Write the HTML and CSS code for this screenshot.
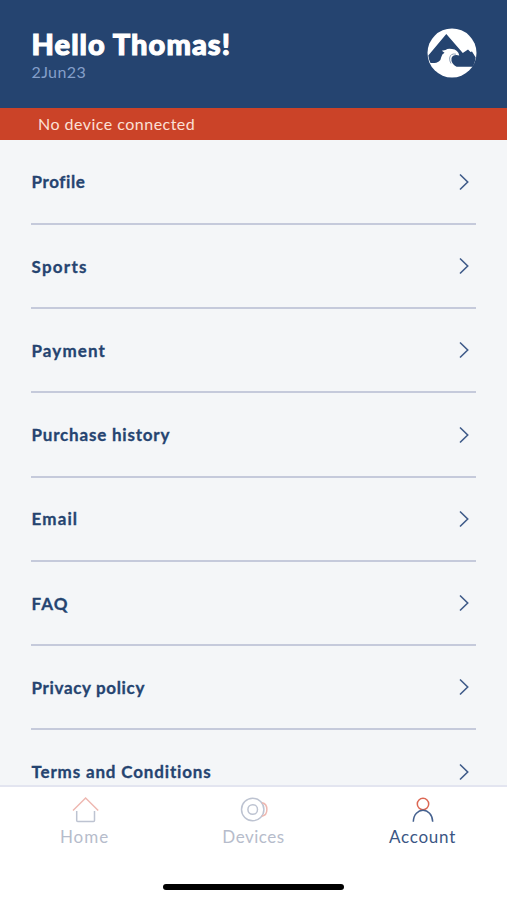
FILE: index.html
```html
<!DOCTYPE html>
<html lang="en">
<head>
<meta charset="utf-8">
<meta name="viewport" content="width=device-width, initial-scale=1">
<title>Account</title>
<link rel="stylesheet" href="styles.css">
</head>
<body>
<div class="app">
  <header class="header">
    <div class="greeting">
      <h1 class="title">Hello Thomas!</h1>
      <p class="date">2Jun23</p>
    </div>
    <svg class="logo" viewBox="0 0 50 50">
      <circle cx="25" cy="25" r="24.5" fill="#fff"/>
      <path fill="#254470" d="M1.300 27.500 L19.300 6 L35.800 25 L41 21.500 L43.500 24 L45 23.500 L48.700 29.500 Q48 34.500 46 38.800 H24 L12 35 H3.500 Q1.500 31 1.300 27.500Z"/>
      <path fill="#fff" d="M6 35.300 Q13.500 35 14.300 29 Q14.800 26 17.500 24.800 L14.800 22.800 L18.500 22 Q21 20 25 21 Q31 21.500 32.300 27.500 Q26 26 24.500 30 Q23.500 35.500 30 39.300 L25 42 L10 39Z"/>
      <path fill="none" stroke="#254470" stroke-width=".5" d="M29 26.200 Q23.500 25 22.600 30 Q22.500 33 24 35.500"/>
    </svg>
  </header>
  <div class="banner">No device connected</div>
  <main class="list">
    <a class="row"><span class="label profile">Profile</span><svg class="chevron" viewBox="0 0 10 18"><path d="M1 1.500 8.700 9 1 16.500"/></svg></a>
    <a class="row"><span class="label sports">Sports</span><svg class="chevron" viewBox="0 0 10 18"><path d="M1 1.500 8.700 9 1 16.500"/></svg></a>
    <a class="row"><span class="label payment">Payment</span><svg class="chevron" viewBox="0 0 10 18"><path d="M1 1.500 8.700 9 1 16.500"/></svg></a>
    <a class="row"><span class="label purchase">Purchase history</span><svg class="chevron" viewBox="0 0 10 18"><path d="M1 1.500 8.700 9 1 16.500"/></svg></a>
    <a class="row"><span class="label email">Email</span><svg class="chevron" viewBox="0 0 10 18"><path d="M1 1.500 8.700 9 1 16.500"/></svg></a>
    <a class="row"><span class="label faq">FAQ</span><svg class="chevron" viewBox="0 0 10 18"><path d="M1 1.500 8.700 9 1 16.500"/></svg></a>
    <a class="row"><span class="label privacy">Privacy policy</span><svg class="chevron" viewBox="0 0 10 18"><path d="M1 1.500 8.700 9 1 16.500"/></svg></a>
    <a class="row"><span class="label terms">Terms and Conditions</span><svg class="chevron" viewBox="0 0 10 18"><path d="M1 1.500 8.700 9 1 16.500"/></svg></a>
  </main>
  <footer class="footer">
    <nav class="tabs">
      <a class="tab home">
        <svg class="icon" viewBox="0 0 28 28"><path class="accent" d="M2 14.500 14.600 2 27.200 14.500"/><path d="M5.700 15V24.500Q5.700 25.500 6.700 25.500H22.500Q23.500 25.500 23.500 24.500V15"/></svg>
        <span>Home</span>
      </a>
      <a class="tab devices">
        <svg class="icon" viewBox="0 0 28 28"><circle cx="12.700" cy="13.500" r="11.200"/><circle cx="12.700" cy="13.500" r="4.800"/><path class="accent" d="M22 6.800C28.500 8 28.500 19 22 20.200"/></svg>
        <span>Devices</span>
      </a>
      <a class="tab account">
        <svg class="icon" viewBox="0 0 28 28"><circle class="accent" cx="14" cy="8" r="5.700"/><path d="M4.300 25.800C4.700 10.500 23.300 10.500 23.700 25.800"/></svg>
        <span>Account</span>
      </a>
    </nav>
    <div class="home-indicator"></div>
  </footer>
</div>
</body>
</html>
```
FILE: styles.css
```css
* { box-sizing: border-box; }
body { margin: 0; font-family: Lato, "Liberation Sans", sans-serif; }
.app {
  height: 900px;
  display: flex;
  flex-direction: column;
  overflow: hidden;
  background: #f4f6f8;
  color: #254470;
}
.header {
  flex: 0 0 108px;
  display: flex;
  justify-content: space-between;
  align-items: flex-start;
  padding: 28px 30px 0 31.500px;
  background: #254470;
}
.title {
  margin: 0;
  font-size: 29px;
  line-height: 32px;
  font-weight: 900;
  letter-spacing: 1.050px;
  -webkit-text-stroke: 1.100px #fff;
  color: #fff;
}
.date {
  margin: 2px 0 0;
  font-size: 16px;
  line-height: 20px;
  letter-spacing: 0.400px;
  color: #849fc9;
}
.logo { width: 50px; height: 50px; }
.banner {
  flex: 0 0 32px;
  height: 32px;
  padding-left: 38px;
  font-size: 16px;
  line-height: 32px;
  letter-spacing: 0.480px;
  background: #cb4328;
  color: #fbe0d6;
}
.list {
  flex: 1 1 0;
  min-height: 0;
  overflow: hidden;
  padding: 0.700px 31px 0;
}
.row {
  height: 84.250px;
  display: flex;
  align-items: center;
  justify-content: space-between;
  padding-right: 7px;
  border-bottom: 2px solid #c5cadb;
}
.label {
  padding: 1px 0 0 0.500px;
  font-size: 17px;
  line-height: 24px;
  font-weight: 700;
  letter-spacing: 0.800px;
  -webkit-text-stroke: 0.300px #254470;
}
.profile { letter-spacing: 0.600px; }
.sports { letter-spacing: 1.250px; }
.payment { letter-spacing: 1.100px; }
.email { letter-spacing: 1.150px; }
.faq { letter-spacing: 1.150px; }
.privacy { letter-spacing: 0.650px; }
.terms { letter-spacing: 0.840px; }
.chevron { width: 10px; height: 18px; fill: none; stroke: #3f5b89; stroke-width: 1.600; }
.footer {
  flex: 0 0 115px;
  display: flex;
  flex-direction: column;
  align-items: center;
  border-top: 2px solid #e3e5f0;
  background: #fff;
}
.tabs { width: 100%; display: flex; padding-top: 9px; }
.tab {
  flex: 1;
  display: flex;
  flex-direction: column;
  align-items: center;
  font-size: 17px;
  line-height: 26px;
  letter-spacing: 0.500px;
  color: #b6bccb;
}
.home { letter-spacing: 0.950px; }
.account { letter-spacing: 0.750px; color: #3b5684; }
.icon { width: 28px; height: 28px; fill: none; stroke: #bdc3d1; stroke-width: 1.500; }
.accent { stroke: #eeb8b1; }
.account .icon { stroke: #45618f; }
.account .accent { stroke: #dc6753; }
.home-indicator { width: 181px; height: 6px; margin-top: 34px; border-radius: 3px; background: #000; }
```
